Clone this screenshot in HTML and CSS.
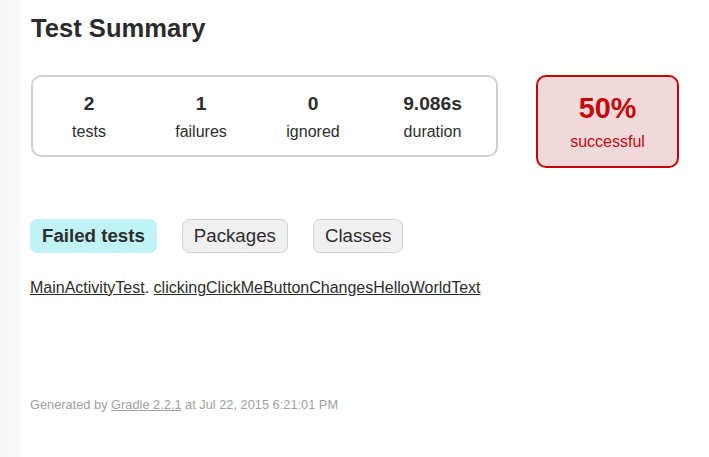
FILE: index.html
```html
<!DOCTYPE html>
<html>
<head>
<meta charset="utf-8">
<link rel="stylesheet" href="styles.css">
</head>
<body>
<div class="content">
  <h1 class="title">Test Summary</h1>
  <div class="summary">
    <div class="summary-group">
      <div class="info-box"><div class="counter">2</div><p class="label">tests</p></div>
      <div class="info-box"><div class="counter">1</div><p class="label">failures</p></div>
      <div class="info-box"><div class="counter">0</div><p class="label">ignored</p></div>
      <div class="info-box info-box-wide"><div class="counter">9.086s</div><p class="label">duration</p></div>
    </div>
    <div class="success-rate">
      <div class="percent">50%</div>
      <p class="label">successful</p>
    </div>
  </div>
  <ul class="tab-links">
    <li class="tab tab-selected">Failed tests</li>
    <li class="tab">Packages</li>
    <li class="tab">Classes</li>
  </ul>
  <p class="failed-line"><a class="link" href="#">MainActivityTest</a>. <a class="link" href="#">clickingClickMeButtonChangesHelloWorldText</a></p>
  <p class="footer">Generated by <a class="footer-link" href="#">Gradle 2.2.1</a> at Jul 22, 2015 6:21:01 PM</p>
</div>
</body>
</html>
```

FILE: styles.css
```css
html {
  background: linear-gradient(to right, #f8f8f8 0, #fafafa 18px, #fdfdfd 21px, #ffffff 23px);
  min-height: 100%;
}
body {
  margin: 0;
  font-family: "Liberation Sans", Arial, sans-serif;
  font-size: 16px;
  color: #2d2d2d;
}
.content {
  padding: 14px 0 0 31px;
}
.title {
  margin: 0;
  font-size: 25.6px;
  font-weight: bold;
  line-height: 29px;
  color: #2b2b2b;
}
.summary {
  display: flex;
  align-items: flex-start;
  margin-top: 32px;
}
.summary-group {
  display: flex;
  border: 2px solid #d0d0d0;
  border-radius: 10px;
}
.info-box {
  width: 112px;
  padding: 16px 0 14px;
  text-align: center;
}
.info-box-wide {
  width: 127px;
}
.counter {
  font-size: 19.2px;
  font-weight: bold;
  line-height: 22px;
  margin-bottom: 8px;
}
.label {
  margin: 0;
  line-height: 18px;
}
.success-rate {
  width: 139px;
  margin-left: 38px;
  padding: 15px 0;
  text-align: center;
  background: #f0d9db;
  border: 2px solid #c80505;
  border-radius: 10px;
  color: #c40808;
}
.percent {
  font-size: 28.8px;
  font-weight: bold;
  line-height: 33px;
  margin-bottom: 8px;
}
.tab-links {
  display: flex;
  list-style: none;
  margin: 51px 0 0 -1px;
  padding: 0;
}
.tab {
  font-size: 18.7px;
  line-height: 22px;
  padding: 5px 11px;
  margin-right: 25px;
  border: 1px solid #d4d4d4;
  border-radius: 7px;
  background: #f0f0f0;
  color: #2d2d2d;
}
.tab-selected {
  background: #c0f2f6;
  border-color: #c0f2f6;
  font-weight: bold;
}
.failed-line {
  margin: 26px 0 0 -1px;
  line-height: 18px;
}
.link {
  color: #2d2d2d;
  text-decoration: underline;
}
.footer {
  margin: 100px 0 0 -1px;
  font-size: 12.8px;
  line-height: 15px;
  color: #a0a0a0;
  white-space: nowrap;
}
.footer-link {
  color: #a0a0a0;
  text-decoration: underline;
}
```
